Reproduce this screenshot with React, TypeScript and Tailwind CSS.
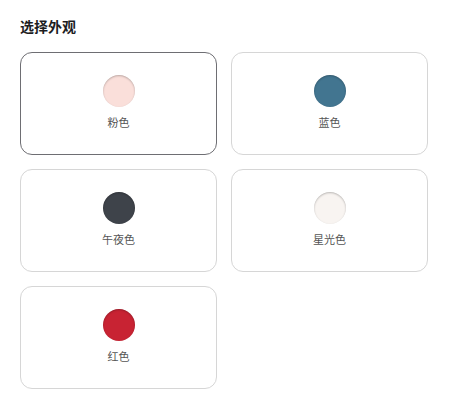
const colors = [
  { name: '粉色', swatch: 'bg-[#fadfda]', selected: true },
  { name: '蓝色', swatch: 'bg-[#427590]' },
  { name: '午夜色', swatch: 'bg-[#3e434a]' },
  { name: '星光色', swatch: 'bg-[#f8f4f1]' },
  { name: '红色', swatch: 'bg-[#c82333]' },
]

// 外观选择：色块卡片网格
export default function App() {
  return (
    <div className="min-h-[408px] bg-white px-5 pt-4 font-['Noto_Sans_CJK_SC','Noto_Sans',sans-serif]">
      <h2 className="text-[14px] leading-5 font-bold text-[#1d1d1f]">选择外观</h2>
      <div className="mt-4 grid grid-cols-[197px_197px] gap-[14px]">
        {colors.map((c) => (
          <button
            key={c.name}
            type="button"
            className={`flex h-[103px] flex-col items-center rounded-xl border bg-white pt-[22px] ${
              c.selected ? 'border-[#6e6e73]' : 'border-[#d6d6d6]'
            }`}
          >
            <span
              className={`h-8 w-8 rounded-full ${c.swatch} shadow-[inset_0_1px_2px_rgba(0,0,0,0.25)]`}
            />
            <span className="mt-[7px] text-[11px] leading-4 text-[#555]">{c.name}</span>
          </button>
        ))}
      </div>
    </div>
  )
}
